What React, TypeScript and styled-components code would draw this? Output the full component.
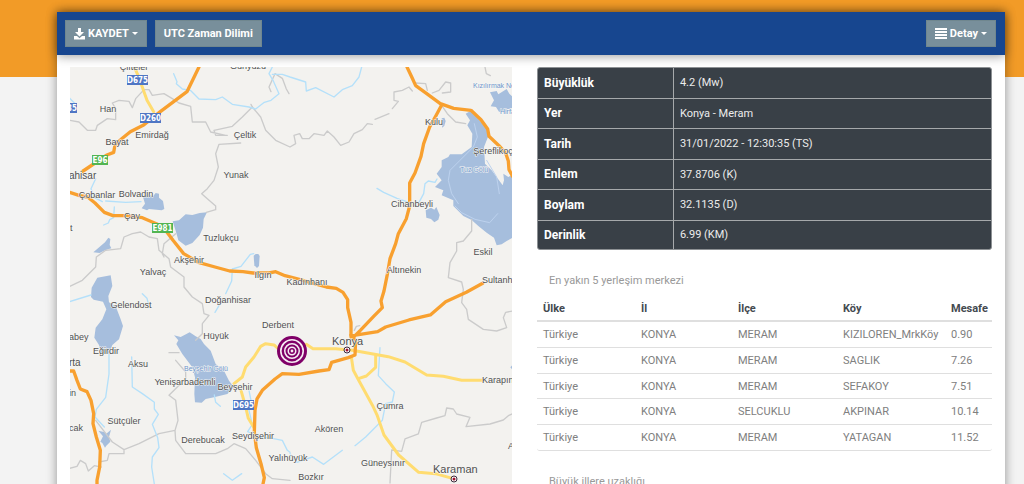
import React from "react";
import styled, { createGlobalStyle } from "styled-components";

const GlobalStyle = createGlobalStyle`
  * { box-sizing: border-box; }
  body {
    margin: 0;
    background: #f3f3f3;
    font-family: Roboto, "Open Sans", sans-serif;
    font-size: 11px;
    color: #808080;
    overflow-x: hidden;
  }
`;

const Page = styled.div`
  background: linear-gradient(#f29b27 77px, #f3f3f3 77px);
  padding: 12px 19px 0 57px;
`;

const Card = styled.main`
  background: #fff;
  box-shadow: 0 0 10px rgba(0, 0, 0, 0.4);
`;

const Toolbar = styled.header`
  display: flex;
  align-items: center;
  gap: 8px;
  height: 43px;
  padding: 0 9px 0 8px;
  background: #17468f;
  box-shadow: 0 1px 10px rgba(0, 0, 0, 0.4);
`;

const Spacer = styled.div`
  flex: 1;
`;

const ToolButton = styled.button`
  display: flex;
  align-items: center;
  gap: 3px;
  height: 27px;
  padding: 0 8px;
  border: 1px solid #70878f;
  background: #788f9b;
  color: #fff;
  font: 700 11px/16px Roboto, "Open Sans", sans-serif;
  white-space: nowrap;
`;

const Caret = styled.span`
  border: 3px solid transparent;
  border-top-color: #fff;
  border-bottom: 0;
`;

const Content = styled.div`
  display: grid;
  grid-template-columns: 442fr 455fr;
  gap: 25px;
  padding: 12px 13px;
`;

const MapPane = styled.section`
  min-width: 0;
  svg { display: block; width: 100%; height: auto; }
`;

const Details = styled.section`
  min-width: 0;
`;

const Facts = styled.table`
  width: 100%;
  height: 183px;
  border-collapse: separate;
  border-spacing: 0;
  table-layout: fixed;
  border: 1px solid #8d9194;
  border-radius: 3px;
  background: #394047;
  color: #ececec;
  overflow: hidden;
  th, td {
    padding: 0 6px;
    text-align: left;
    border-bottom: 1px solid #a6a9ab;
  }
  th {
    width: 30%;
    color: #fff;
    font-size: 12px;
    border-right: 1px solid #a6a9ab;
  }
  tr:last-child > * { border-bottom: 0; }
`;

const Places = styled.table`
  width: 100%;
  border-collapse: separate;
  border-spacing: 0;
  table-layout: fixed;
  border-bottom: 1px solid #dfdfdf;
  border-radius: 3px;
  caption {
    height: 46px;
    padding: 22px 12px 0;
    color: #999;
    line-height: 18px;
    text-align: left;
  }
  th, td {
    padding: 0 6px;
    text-align: left;
    white-space: nowrap;
  }
  th {
    height: 26px;
    color: #444a50;
    border-bottom: 2px solid #dfdfdf;
  }
  td { height: 26px; border-bottom: 1px solid #dfdfdf; }
  tbody tr:nth-child(odd) td { height: 25px; }
  tbody tr:first-child td { height: 26px; }
  tr:last-child td { border-bottom: 0; }
`;

const facts = [
  ["Büyüklük", "4.2 (Mw)"],
  ["Yer", "Konya - Meram"],
  ["Tarih", "31/01/2022 - 12:30:35 (TS)"],
  ["Enlem", "37.8706 (K)"],
  ["Boylam", "32.1135 (D)"],
  ["Derinlik", "6.99 (KM)"],
];

const villages = [
  ["Türkiye", "KONYA", "MERAM", "KIZILOREN_MrkKöy", "0.90"],
  ["Türkiye", "KONYA", "MERAM", "SAGLIK", "7.26"],
  ["Türkiye", "KONYA", "MERAM", "SEFAKOY", "7.51"],
  ["Türkiye", "KONYA", "SELCUKLU", "AKPINAR", "10.14"],
  ["Türkiye", "KONYA", "MERAM", "YATAGAN", "11.52"],
];

const columns = [
  { name: "Ülke", width: 98 },
  { name: "İl", width: 97 },
  { name: "İlçe", width: 105 },
  { name: "Köy", width: 108 },
  { name: "Mesafe", width: 47 },
];

function PlaceTable({ title, rows }: { title: string; rows: string[][] }) {
  return (
    <Places>
      <caption>{title}</caption>
      <colgroup>
        {columns.map((c) => <col key={c.name} style={{ width: c.width }} />)}
      </colgroup>
      {rows.length > 0 && (
        <thead>
          <tr>{columns.map((c) => <th key={c.name} scope="col">{c.name}</th>)}</tr>
        </thead>
      )}
      <tbody>
        {rows.map((r, i) => (
          <tr key={i}>{r.map((v, j) => <td key={j}>{v}</td>)}</tr>
        ))}
      </tbody>
    </Places>
  );
}

type Label = [string, number, number];

const towns: Label[] = [
  ["Çifteler", 134, 70], ["Günyüzü", 248, 69], ["Han", 108, 112], ["Bayat", 117, 145],
  ["Emirdağ", 152, 138], ["Çeltik", 245, 138], ["Yunak", 236, 178], ["Çobanlar", 97, 198],
  ["Bolvadin", 136, 197], ["Çay", 132, 219], ["Tuzlukçu", 221, 241], ["Akşehir", 189, 263],
  ["Yalvaç", 153, 275], ["Ilgın", 263, 278], ["Doğanhisar", 228, 303], ["Gelendost", 131, 308],
  ["Derbent", 278, 328], ["Hüyük", 216, 339], ["Kulu", 434, 125], ["Şereflikoç", 493, 154],
  ["Cihanbeyli", 412, 207], ["Eskil", 483, 255], ["Altınekin", 404, 273], ["Kadınhanı", 307, 285],
  ["Eğirdir", 106, 354], ["Aksu", 138, 367], ["Yenişarbademli", 185, 385], ["Beyşehir", 235, 390],
  ["Sütçüler", 124, 424], ["Derebucak", 203, 443], ["Seydişehir", 253, 439], ["Yalıhüyük", 288, 461],
  ["Akören", 329, 432], ["Çumra", 390, 409], ["Güneysınır", 383, 466], ["Bozkır", 311, 480],
];

const cutTowns: Label[] = [
  ["t", 70, 231], ["abey", 69, 340], ["in", 69, 396], ["cak", 69, 431],
  ["Sultanh", 482, 283], ["Karapın", 482, 383], ["A", 508, 449],
];

const shields: [string, number, number, string][] = [
  ["D675", 127, 75, "#4f76c4"], ["D260", 140, 113, "#4f76c4"], ["35", 56, 103, "#4f76c4"],
  ["D695", 233, 400, "#4f76c4"], ["E96", 92, 155, "#52b552"], ["E981", 152, 223, "#52b552"],
];

const WATER = "#a6bedd";

function RegionMap() {
  return (
    <svg viewBox="70 67 442 440" role="img" aria-label="Harita">
      <rect x="69" y="67" width="444" height="441" fill="#f3f2ef" />
      <g transform="translate(69 67) scale(.33333)" fill="none" strokeLinejoin="round" strokeLinecap="round">
        {/* lakes */}
        <g fill={WATER}>
          <path d="M222 390L238 382 252 388 260 378 270 380 270 392 282 402 286 426 278 430 240 426 234 430 218 424 228 410z" />
          <path d="M311 463L330 460 350 442 370 444 392 438 414 436 404 456 402 482 392 504 370 528 350 536 328 520 322 498z" />
          <path d="M73 556L108 526 118 512 124 516 122 534 127 544 108 550 92 558z" />
          <path d="M125 625L85 632 68 662 66 690 74 698 102 704 112 727 100 757 80 782 76 812 90 834 96 857 120 860 130 834 150 817 162 777 155 757 140 718 120 706 118 687 130 657z" />
          <path d="M554 566L560 561 568 561 572 567 570 597 564 603 556 595z" />
          <path d="M315 805L335 810 362 796 380 808 395 816 405 831 425 851 440 891 465 911 480 941 495 961 475 981 435 991 410 996 398 1007 378 1006 376 981 378 931 370 901 340 861 322 831 328 820z" />
          <path d="M88 1091L108 1096 112 1100 126 1088 120 1110 124 1124 112 1136 108 1142 100 1128 94 1124 102 1108z" />
          <path d="M1190 140L1208 130 1223 150 1253 185 1259 205 1245 240 1248 290 1268 310 1301 355 1305 340 1303 320 1318 330 1331 322 1331 512 1313 522 1298 532 1283 535 1275 512 1253 497 1228 477 1208 459 1183 447 1168 432 1153 417 1153 400 1118 385 1123 370 1098 360 1118 340 1103 320 1118 300 1118 280 1138 270 1143 262 1178 262 1208 240 1210 200 1195 175 1203 160z" />
          <path d="M1263 76L1283 72 1288 82 1313 66 1321 80 1331 90 1331 122 1313 128 1313 136 1290 134 1281 120 1265 118 1275 100z" />
          <path d="M1118 154l8-2 4 10-4 14-6 6-2-14z" />
          <path d="M1070 430L1086 422 1096 428 1102 420 1112 444 1108 458 1096 466 1086 456 1072 452z" />
          <path d="M1324 901l7-8v16z" />
        </g>
        {/* province borders */}
        <g stroke="#cbcbcb" strokeWidth="4">
          <path d="M2 160L30 165 55 190 80 190 85 175 115 155 140 158 140 125 130 108 150 100 180 103 190 122 200 95 225 68 240 68 250 85 285 80 310 95 330 108 365 118 370 165 410 165 425 195 470 205M475 205L440 205 435 190 490 178 520 150 550 120 575 150 590 190 620 220 663 240 680 230 675 205 692 200 700 215 720 215 735 200 765 205 775 192 795 210 815 235 840 225 855 200 880 188 895 170 910 172M918 157L960 140M970 125L988 103 975 100 975 75 1000 70 1020 60 1030 72M1040 48L1070 50 1075 70M1090 78L1110 70 1130 45 1145 48 1145 75 1120 78M1120 118L1135 140 1160 165 1190 170" />
          <path d="M550 120L546 112M515 228L450 232 440 260 448 300 435 340 415 365 398 380 415 395 440 417 440 428 412 436M320 500L285 530 280 560 285 570M265 515L270 550 300 575 305 600 345 630 345 660 370 690 400 710 405 740 420 745 400 770 400 800 380 820" />
          <path d="M2 658L40 640 80 600 82 570 110 550 155 545 165 510 190 500 215 495 240 510 265 515" />
          <path d="M300 857L330 857M320 880L350 915 350 935 300 985 320 1000 327 1060 318 1090 270 1100 210 1130 165 1148 130 1125 80 1060M165 1148L165 1160 120 1160 115 1180 90 1185M318 1090L320 1120 350 1160 440 1160 475 1145 495 1130 530 1145 560 1180 590 1220 610 1235 663 1240M2 1204L24 1198 34 1180 50 1190 58 1212 76 1196 96 1200" />
          <path d="M1208 457L1208 492 1183 522 1163 527 1163 552 1143 587 1138 632 1178 645 1183 667 1178 707 1193 727 1198 757 1243 787 1283 792 1313 782 1303 752 1310 736 1331 732" />
          <path d="M963 1248L968 1149 998 1153 1008 1116 1048 1101 1058 1066 1103 1053 1128 1046 1133 1023 1153 1026 1163 1041 1203 1051 1191 1079 1263 1071 1303 1059 1318 1046 1331 1040" />
          <path d="M660 80L652 66 640 34 618 20 600 60 606 74M1248 0L1252 20 1264 26M856 790L862 778 872 776" />
        </g>
        {/* streams */}
        <g stroke="#b4e0fa" strokeWidth="4">
          <path d="M314 20L324 44 322 50 340 66 364 70 390 96 440 98 460 90 490 112 540 120 560 126 586 106 606 100 630 80 612 40 600 20 610 0M610 22L640 22 663 30 710 45 712 72 740 62 795 90 820 68 850 56 870 30 878 0M2 94L22 114M80 335L66 365 76 391 100 404M110 402L170 406 216 404" />
          <path d="M136 420L134 452 122 458 118 468 104 474M2 704L66 684M220 680L234 694 238 710M554 560L544 562 516 598 490 606 488 642 470 680M464 698L450 716 438 736" />
          <path d="M120 861L120 921 110 991 82 1027 78 1050 106 1080M188 870L190 960 220 980 256 1006 256 1026 268 1042 250 1072 266 1112 270 1142 250 1170 248 1200 256 1251M436 984L440 1006 454 1018M540 970L546 1000 538 1022 550 1072 536 1094 570 1110 610 1114 640 1120 655 1150 663 1156M464 1220L490 1240 518 1220M663 1160L684 1186 730 1170 764 1192 820 1150M933 842L928 926 950 950 976 975 970 1005 950 1010 940 1060 890 1110 858 1136M924 364L944 376 984 394 1020 406M1050 406L1064 380 1068 350 1078 342 1098 346 1104 336" />
          <path d="M1216 170L1225 210 1213 240 1173 280 1143 310 1138 340 1148 380 1168 410M1253 280L1283 330 1291 380M1158 417L1178 437 1218 457 1262 467 1286 440" stroke="#bdd2ee" strokeWidth="3" />
        </g>
        {/* secondary roads */}
        <g stroke="#ffdc70" strokeWidth="9">
          <path d="M196 0L210 32 234 100 254 134" />
          <path d="M495 950L520 930 530 900 555 870 575 838 590 830 615 834 640 856M516 970L530 1020 538 1054 556 1084M712 832L732 845 800 845 850 850 958 869 1008 885 1073 924 1123 928 1178 940 1245 940M847 870L853 910 867 936 911 1016 925 1046 945 1104 989 1164 1049 1216 1099 1220 1150 1234M920 866L920 901 892 927 868 935" />
        </g>
        {/* main roads */}
        <g stroke="#f8a02f" strokeWidth="10">
          <path d="M390 0L354 74 274 134 224 174 184 194 160 214 138 234 134 256 114 264 38 315M2 376L32 386 56 390 78 408 106 436 132 446 172 446 220 452 262 470 284 482 312 520 344 560 388 586 438 600 482 612 522 614 552 618 600 618 620 614 648 626 688 636 722 646 772 660 802 664 822 676 836 698 836 722 846 766 846 810" />
          <path d="M1014 0L1030 34 1040 56 1068 76 1114 110 1154 124 1206 130 1236 158 1256 186 1260 208 1290 236 1310 258 1318 282 1320 308 1331 328M1118 114L1102 144 1082 180 1064 230 1056 268 1038 318 1022 348 1022 417 1012 455 988 500 980 530 963 575 955 622 945 672 936 702 940 722 914 748 874 790 852 812M850 806L926 794 950 780 1020 759 1084 744 1130 704 1192 676 1241 649" />
          <path d="M846 804L860 820 858 864 838 872 788 886 780 908 750 912 690 922 640 920 618 936 580 970 564 996 558 1030 556 1096 562 1142 576 1190 586 1232 582 1251M2 912L14 912 24 940 34 966 54 974 66 1000 74 1040 72 1070 82 1110 94 1150 92 1200 84 1240 84 1320" />
        </g>
      </g>
      <g fontFamily='"Liberation Sans", Arial, sans-serif' fontSize="9" fill="#505050" stroke="#f7f7f5" strokeWidth="1" paintOrder="stroke">
        <g textAnchor="middle">
          {towns.map(([name, x, y]) => <text key={name} x={x} y={y}>{name}</text>)}
        </g>
        {cutTowns.map(([name, x, y]) => <text key={name} x={x} y={y}>{name}</text>)}
        <g fontSize="10">
          <text x="69" y="179">ahisar</text>
          <text x="69" y="366">rta</text>
        </g>
        <g fontSize="11">
          <text x="332" y="345">Konya</text>
          <text x="433" y="473">Karaman</text>
        </g>
        <g fontSize="7" fill="#6f95cb">
          <text x="473" y="88">Kızılırmak Ne</text>
          <text x="500" y="114">Hirfa</text>
          <text x="460" y="172">Tuz Gölü</text>
          <text x="184" y="371">Beyşehir Gölü</text>
        </g>
      </g>
      {shields.map(([name, x, y, color]) => {
        const w = name.length > 3 || name === "35" ? 21 : 16;
        return (
          <g key={name}>
            <rect x={x} y={y} width={w} height="10" fill={color} />
            <text x={name === "35" ? x + 21 : x + w / 2} y={y + 8} textAnchor={name === "35" ? "end" : "middle"} fontFamily='"DejaVu Sans Condensed", "DejaVu Sans", sans-serif' fontWeight="700" fontSize="8" fill="#fff">{name}</text>
          </g>
        );
      })}
      {[[347, 350], [454, 479]].map(([x, y]) => (
        <g key={x}>
          <circle cx={x} cy={y} r="3" fill="#fff" stroke="#3c2a3c" strokeWidth="1" />
          <circle cx={x} cy={y} r="1.5" fill="#a0102e" />
        </g>
      ))}
      <g fill="none" stroke="#800068">
        <circle cx="292" cy="351" r="13.5" fill="#f6eef4" strokeWidth="3" />
        <circle cx="292" cy="351" r="9.2" strokeWidth="2.4" />
        <circle cx="292" cy="351" r="5.5" strokeWidth="2" />
        <circle cx="292" cy="351" r="2.2" strokeWidth="1.6" />
      </g>
    </svg>
  );
}

function DownloadIcon() {
  return (
    <svg width="11" height="12" viewBox="0 0 11 12" fill="#fff" aria-hidden="true">
      <path d="M4 0h3v4h3L5.500 8.500 1 4h3zM0 8h3l2.500 2.300L8 8h3v3.500H0z" />
    </svg>
  );
}

function ListIcon() {
  return (
    <svg width="12" height="11" viewBox="0 0 12 11" fill="#fff" aria-hidden="true">
      <path d="M0 0h12v2H0zM0 3h12v2H0zM0 6h12v2H0zM0 9h12v2H0z" />
    </svg>
  );
}

export default function App() {
  return (
    <Page>
      <GlobalStyle />
      <Card>
        <Toolbar>
          <ToolButton type="button"><DownloadIcon />KAYDET<Caret /></ToolButton>
          <ToolButton type="button">UTC Zaman Dilimi</ToolButton>
          <Spacer />
          <ToolButton type="button"><ListIcon />Detay<Caret /></ToolButton>
        </Toolbar>
        <Content>
          <MapPane><RegionMap /></MapPane>
          <Details>
            <Facts>
              <tbody>
                {facts.map(([name, value]) => (
                  <tr key={name}><th scope="row">{name}</th><td>{value}</td></tr>
                ))}
              </tbody>
            </Facts>
            <PlaceTable title="En yakın 5 yerleşim merkezi" rows={villages} />
            <PlaceTable title="Büyük illere uzaklığı" rows={[]} />
          </Details>
        </Content>
      </Card>
    </Page>
  );
}
